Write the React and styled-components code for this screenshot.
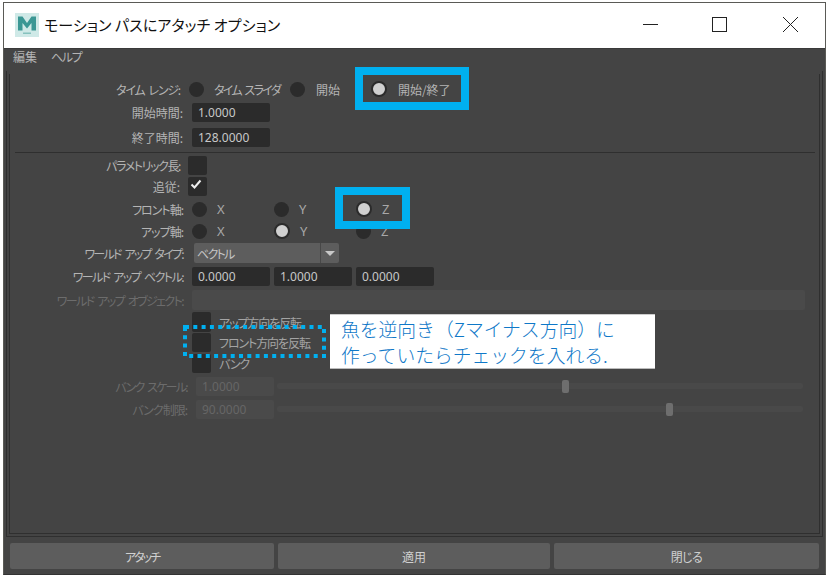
import React from 'react';
import styled, { createGlobalStyle } from 'styled-components';

const Global = createGlobalStyle`
  html, body { margin: 0; padding: 0; background: #fff; }
  * { box-sizing: border-box; }
`;
const jp = `"Noto Sans CJK JP", "Noto Sans", sans-serif`;
const latin = `"Noto Sans", "Noto Sans CJK JP", sans-serif`;

const Page = styled.div`
  position: relative; width: 829px; height: 579px; overflow: hidden;
  background: #fff; padding: 2px 3px 4px 3px;
  font-family: ${jp}; font-feature-settings: "palt"; font-size: 12px;
`;
const Win = styled.div`
  height: 100%; display: flex; flex-direction: column;
  border: 1px solid #5a5a56; border-bottom-color: #333; background: #444;
`;
const TitleBar = styled.div`
  height: 45px; flex: none; background: #fff; display: flex; align-items: center;
  padding: 0 0 2px 11px; position: relative;
`;
const TitleText = styled.div`
  margin-left: 5px; font-size: 15px; color: #111; letter-spacing: 0.1px; white-space: nowrap; flex: 1;
`;
const WinBtn = styled.div`
  width: 15px; height: 15px; flex: none; margin-right: ${p => p.$mr}px; display: flex;
  svg { display: block; }
`;
const MenuBar = styled.div`
  height: 23px; flex: none; display: flex; align-items: center; padding: 0 0 7px 9px; gap: 14px;
  color: #b4b4b4; font-size: 12px; border-top: 1px solid #3a3a3a;
`;
const Tight = styled.span`
  letter-spacing: ${p => p.$t}px;
`;
const FrameOuter = styled.div`
  margin: 0 2px 0 2px; flex: none; height: 466px; padding: 3px 2px 2px 2px;
  border: 1px solid #2f2f2f; border-top: none; display: flex;
`;
const FrameInner = styled.div`
  flex: 1; border: 1px solid #2f2f2f; border-top: none; padding: 4px 0 0 0;
  display: flex; flex-direction: column; min-width: 0;
`;
const Row = styled.div`
  height: ${p => p.$h}px; flex: none; display: flex; align-items: center;
  margin-top: ${p => p.$mt || 0}px;
`;
const Label = styled.div`
  width: ${p => p.$w || 173}px; flex: none; text-align: right; white-space: pre;
  color: ${p => (p.$dim ? '#6c6c6c' : '#b4b4b4')}; margin-right: ${p => p.$mr ?? 9}px;
  letter-spacing: ${p => p.$t || 0}px; word-spacing: 2.5px;
`;
const Divider = styled.div`
  height: 1px; background: #2f2f2f; margin: 0 4px 0 5px; flex: none;
`;
const Field = styled.div`
  width: ${p => p.$w || 78}px; height: 19px; flex: none; border-radius: 2px;
  background: ${p => (p.$off ? '#4a4a4a' : '#2b2b2b')};
  color: ${p => (p.$off ? '#666' : '#c8c8c8')};
  font-family: ${latin}; font-size: 12px; line-height: 19px; padding-left: 6px;
  margin-right: ${p => p.$mr || 0}px;
`;
const WideField = styled.div`
  width: 613px; height: 20px; flex: none; border-radius: 2px; background: #4a4a4a;
`;
const RadioDot = styled.span`
  width: ${p => (p.$on ? 16 : 15)}px; height: ${p => (p.$on ? 16 : 15)}px; flex: none; border-radius: 50%;
  background: ${p => (p.$on ? '#d0d0d0' : '#2b2b2b')};
  border: ${p => (p.$on ? '2px solid #2b2b2b' : 'none')};
  margin-left: ${p => p.$ml || 0}px;
`;
const OptLabel = styled.span`
  color: #b4b4b4; white-space: pre; margin-left: ${p => p.$ml || 0}px;
  letter-spacing: ${p => p.$t || 0}px; word-spacing: 2.5px;
`;
const AxisLetter = styled.span`
  color: #a8a8a8; font-family: ${latin}; font-size: 13px; margin-left: 10px;
`;
const AxisOpt = styled.div`
  width: 82px; flex: none; display: flex; align-items: center;
`;
const Check = styled.div`
  width: 19px; height: ${p => p.$h || 19}px; flex: none; border-radius: 2px; background: #2b2b2b;
  margin-left: ${p => p.$ml || 0}px; display: flex; align-items: flex-start; justify-content: flex-start;
`;
const CheckLabel = styled.span`
  color: #a4a4a4; margin-left: 8px; white-space: pre; letter-spacing: -1.1px;
`;
const Combo = styled.div`
  width: 145px; height: 20px; flex: none; margin-left: 2px; border-radius: 2px; background: #5d5d5d;
  display: flex; align-items: center; color: #c4c4c4; padding-left: 3px;
`;
const ComboText = styled.span` flex: 1; letter-spacing: -1.7px; `;
const ComboArrow = styled.span`
  width: 19px; height: 20px; flex: none; border-left: 1px solid #484848; display: flex; align-items: center; justify-content: center;
  &::after { content: ""; border-left: 5px solid transparent; border-right: 5px solid transparent; border-top: 5px solid #c8c8c8; }
`;
const Slider = styled.div`
  width: 526px; height: 19px; margin-left: 3px; flex: none; position: relative;
  &::before { content: ""; position: absolute; left: 0; right: 0; top: 6px; height: 6px; border-radius: 2px; background: #494949; }
`;
const Thumb = styled.div`
  position: absolute; left: ${p => p.$x}px; top: 3px; width: 7px; height: 13px; border-radius: 2px; background: #6e6e6e;
`;
const Footer = styled.div`
  flex: 1; display: flex; gap: 4px; padding: 6px 6px 6px 6px;
`;
const Btn = styled.div`
  flex: ${p => p.$g} 1 0; height: 26px; background: #5d5d5d; border-radius: 2px; color: #d0d0d0;
  display: flex; align-items: center; justify-content: center; font-size: 12px;
  letter-spacing: ${p => p.$t || 0}px;
`;
const Highlight = styled.div`
  position: absolute; left: ${p => p.$x}px; top: ${p => p.$y}px; width: ${p => p.$w}px; height: ${p => p.$h}px;
  border: 8px solid #00b0f0;
`;
const DotBox = styled.svg`
  position: absolute; left: 183px; top: 325px;
`;
const Callout = styled.div`
  position: absolute; left: 330px; top: 314px; width: 325px; height: 55px;
  background: #fff; border-top: 1px solid #ccc; border-bottom: 1px solid #bbb;
  padding: 1px 0 0 11px; color: #0f78c8; font-size: 18.8px; font-weight: 300; line-height: 26px; white-space: pre;
  font-feature-settings: normal;
`;

const LogoSvg = styled.svg`
  flex: none; filter: blur(0.4px);
`;
const Logo = () => (
  <LogoSvg width="24" height="24" viewBox="0 0 24 24">
    <rect width="24" height="24" fill="#cfe9e7" />
    <path d="M3 17.500V3.500h4.500L12 10l4.500-6.500H21v14h-4.500V10L12 15.500 7.500 10v7.500z" fill="#3a9794" />
    <rect x="8" y="19.500" width="8" height="1.500" fill="#86c2be" />
  </LogoSvg>
);

const Axis = ({ title, sel }) => (
  <>
    <Label $t={-1}>{title}</Label>
    {['X', 'Y', 'Z'].map(a => (
      <AxisOpt key={a}>
        <RadioDot $on={sel === a} />
        <AxisLetter>{a}</AxisLetter>
      </AxisOpt>
    ))}
  </>
);

export default function App() {
  return (
    <Page>
      <Global />
      <Win>
        <TitleBar>
          <Logo />
          <TitleText>モーション パスにアタッチ オプション</TitleText>
          <WinBtn $mr={54}>
            <svg width="15" height="15"><path d="M0 7.500h15" stroke="#222" strokeWidth="1" /></svg>
          </WinBtn>
          <WinBtn $mr={56}>
            <svg width="15" height="15"><rect x=".5" y=".5" width="14" height="14" fill="none" stroke="#222" /></svg>
          </WinBtn>
          <WinBtn $mr={27}>
            <svg width="15" height="15"><path d="M0 0l15 15M15 0L0 15" stroke="#222" strokeWidth="1" /></svg>
          </WinBtn>
        </TitleBar>
        <MenuBar><span>編集</span><Tight $t={-1.3}>ヘルプ</Tight></MenuBar>
        <FrameOuter>
          <FrameInner>
            <Row $h={22}>
              <Label $w={170} $mr={9} $t={-1.2}>タイム レンジ:</Label>
              <RadioDot />
              <OptLabel $ml={10} $t={-1.7}>タイム スライダ</OptLabel>
              <RadioDot $ml={10} />
              <OptLabel $ml={11}>開始</OptLabel>
              <RadioDot $on $ml={31} />
              <OptLabel $ml={11}>開始/終了</OptLabel>
            </Row>
            <Row $h={23} $mt={1}><Label>開始時間:</Label><Field>1.0000</Field></Row>
            <Row $h={23} $mt={2}><Label>終了時間:</Label><Field>128.0000</Field></Row>
            <Row $h={3} />
            <Divider />
            <Row $h={3} />
            <Row $h={19}><Label $w={170} $mr={8} $t={-1.4}>パラメトリック長:</Label><Check /></Row>
            <Row $h={19} $mt={2}>
              <Label $w={170} $mr={8}>追従:</Label>
              <Check>
                <svg width="19" height="19" viewBox="0 0 19 19"><path d="M3.500 7.500l3 3 6-7" fill="none" stroke="#eee" strokeWidth="2" /></svg>
              </Check>
            </Row>
            <Row $h={22} $mt={2}><Axis title="フロント軸:" sel="Z" /></Row>
            <Row $h={22}><Axis title="アップ軸:" sel="Y" /></Row>
            <Row $h={22}>
              <Label $t={-1.7}>ワールド アップ タイプ:</Label>
              <Combo><ComboText>ベクトル</ComboText><ComboArrow /></Combo>
            </Row>
            <Row $h={23} $mt={1}>
              <Label $t={-1.55}>ワールド アップ ベクトル:</Label>
              <Field $mr={4}>0.0000</Field><Field $mr={4}>1.0000</Field><Field>0.0000</Field>
            </Row>
            <Row $h={24}><Label $dim $t={-1.6}>ワールド アップ オブジェクト:</Label><WideField /></Row>
            <Row $h={20}>
              <Check $ml={182} $h={20} /><CheckLabel>アップ方向を反転</CheckLabel>
            </Row>
            <Row $h={19} $mt={1}>
              <Check $ml={182} /><CheckLabel>フロント方向を反転</CheckLabel>
            </Row>
            <Row $h={19} $mt={2}>
              <Check $ml={182} /><CheckLabel>バンク</CheckLabel>
            </Row>
            <Row $h={19} $mt={4}>
              <Label $w={177} $dim $t={-1.7}>バンク スケール:</Label>
              <Field $off>1.0000</Field><Slider><Thumb $x={285} /></Slider>
            </Row>
            <Row $h={19} $mt={4}>
              <Label $w={177} $dim $t={-1}>バンク制限:</Label>
              <Field $off>90.0000</Field><Slider><Thumb $x={389} /></Slider>
            </Row>
          </FrameInner>
        </FrameOuter>
        <Footer>
          <Btn $g={264} $t={-2}>アタッチ</Btn>
          <Btn $g={272}>適用</Btn>
          <Btn $g={265} $t={-0.5}>閉じる</Btn>
        </Footer>
      </Win>
      <Highlight $x={355} $y={67} $w={114} $h={43} />
      <Highlight $x={335} $y={187} $w={75} $h={42} />
      <DotBox width="143" height="33">
        <rect x="2" y="2" width="139" height="29" fill="none" stroke="#00b0f0" strokeWidth="4" strokeDasharray="4 4.300" />
      </DotBox>
      <Callout>{'魚を逆向き（Zマイナス方向）に\n作っていたらチェックを入れる.'}</Callout>
    </Page>
  );
}
